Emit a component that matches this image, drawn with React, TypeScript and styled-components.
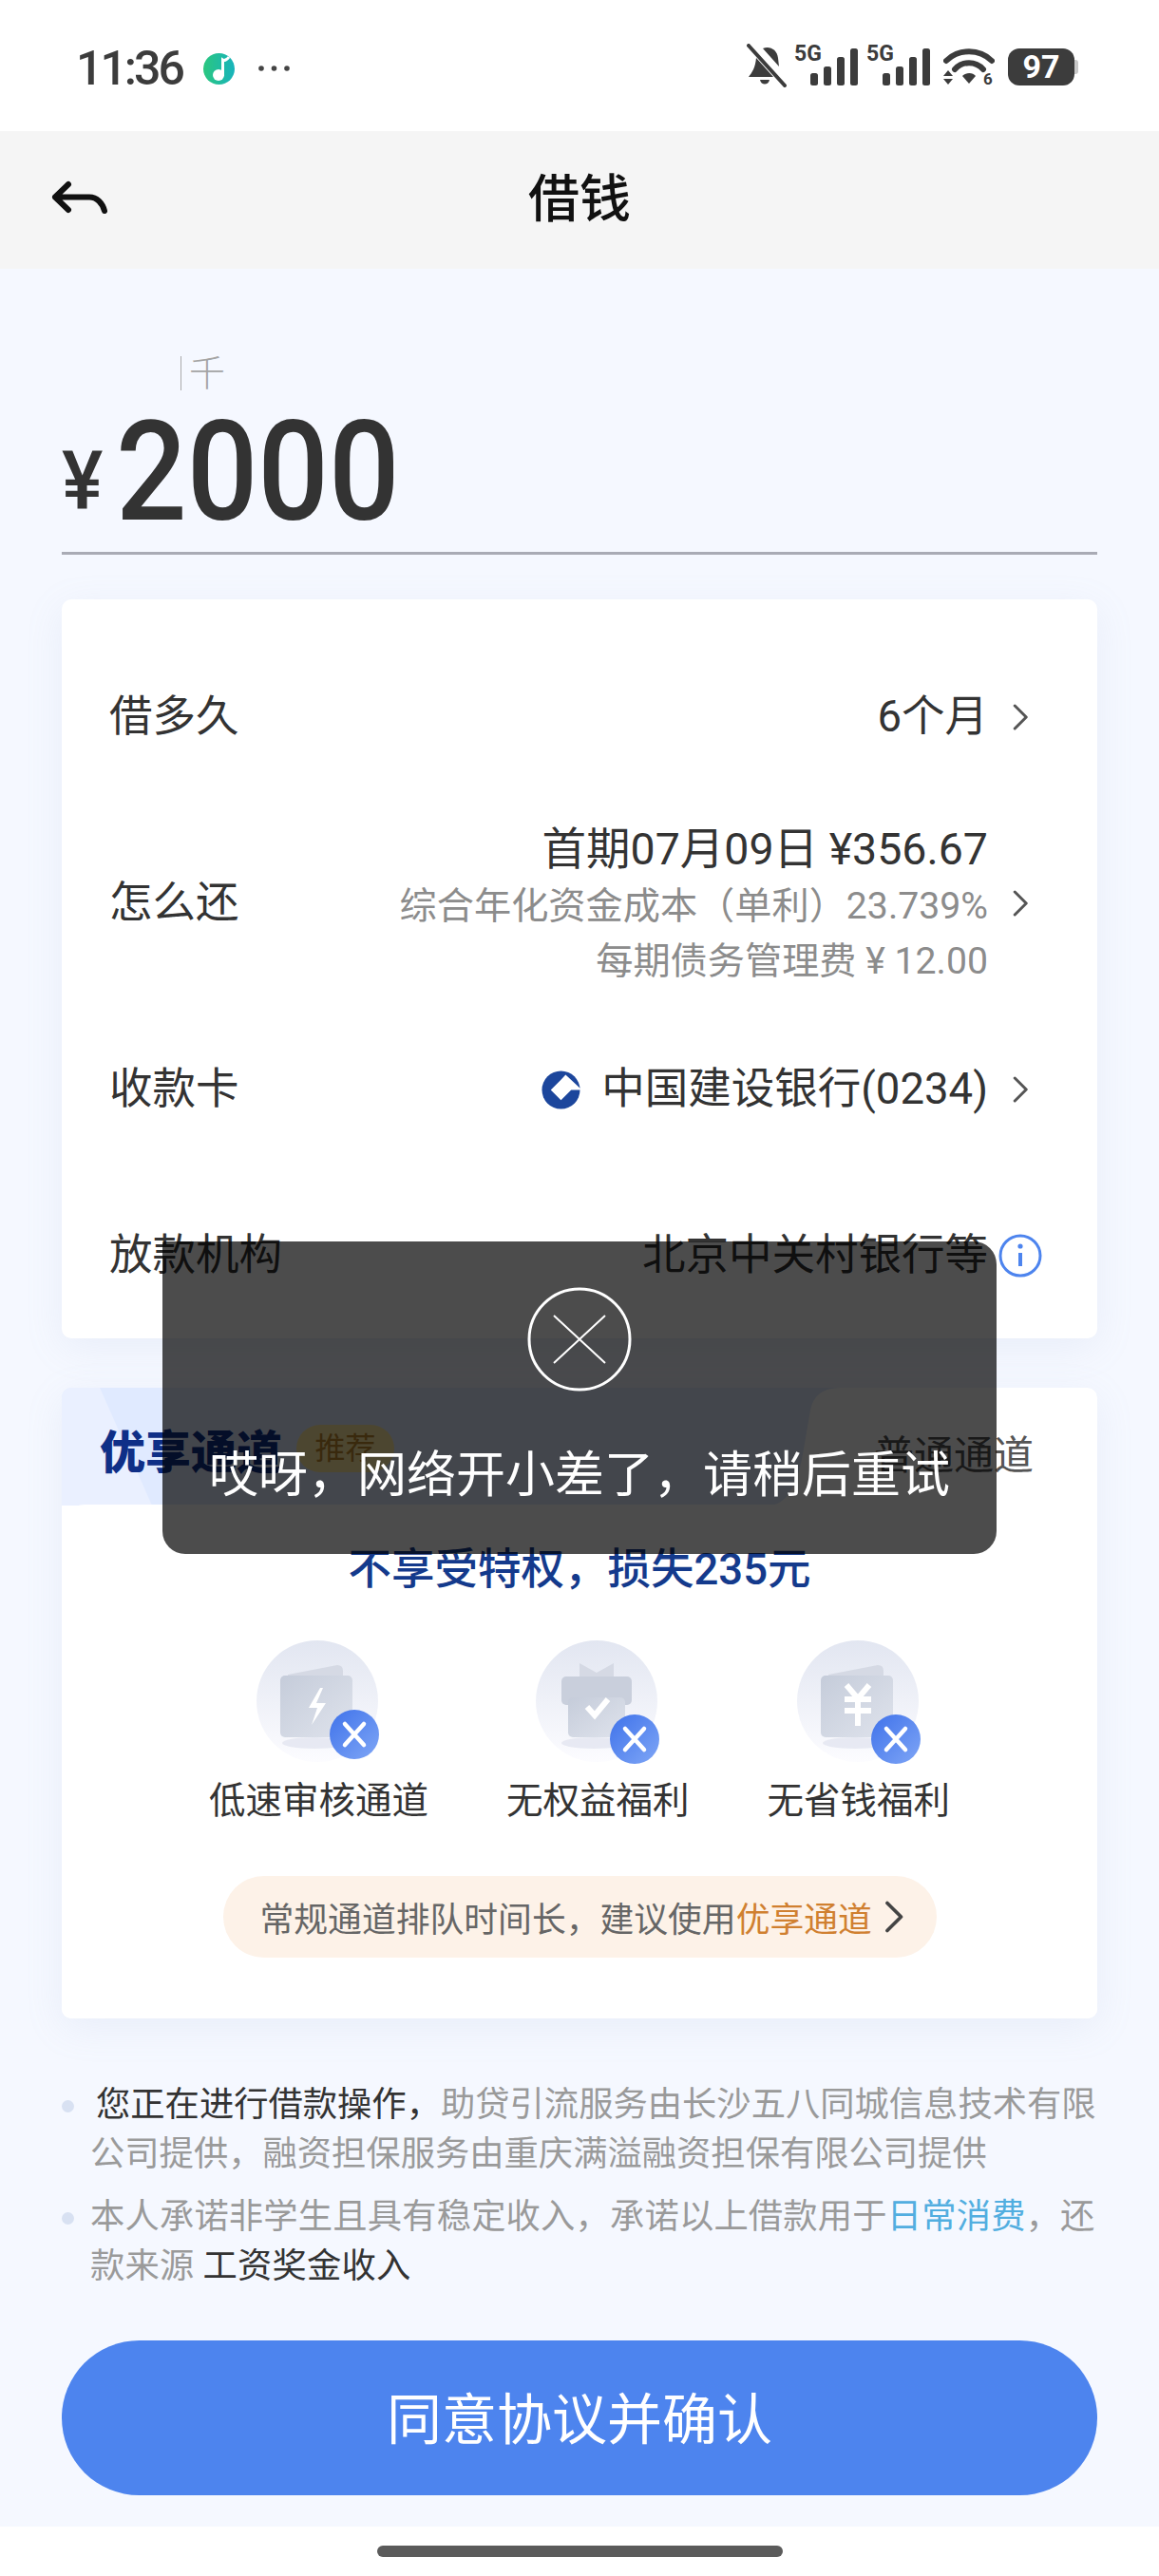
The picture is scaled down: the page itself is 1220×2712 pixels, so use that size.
import React from "react";
import styled, { createGlobalStyle } from "styled-components";

const CJK = `Roboto, "Noto Sans CJK SC", sans-serif`;

const Global = createGlobalStyle`
  html, body { margin: 0; padding: 0; background: #fff; }
  body { font-family: ${CJK}; }
  * { box-sizing: border-box; }
`;

const Page = styled.div`
  position: relative;
  width: 1220px;
  height: 2712px;
  overflow: hidden;
  display: flex;
  flex-direction: column;
  background: #f5f8ff;
`;

const StatusBar = styled.div`
  height: 138px;
  flex: none;
  background: #fff;
  display: flex;
  align-items: center;
  justify-content: space-between;
  padding: 0 85px 0 80px;
`;

const StatusLeft = styled.div`
  display: flex;
  align-items: center;
  padding-top: 6px;
`;

const Time = styled.span`
  font: 500 50px/1 Roboto, sans-serif;
  color: #3c3c3c;
  letter-spacing: -3px;
  width: 134px;
`;

const Dots = styled.svg`
  margin-left: 25px;
`;

const StatusRight = styled.div`
  display: flex;
  align-items: center;
  gap: 8px;
`;

const WifiIcon = styled.svg`
  margin: 2px 0 0 5px;
`;

const Battery = styled.div`
  position: relative;
  width: 70px;
  height: 39px;
  border-radius: 12px;
  background: #3c3c3c;
  color: #fff;
  font: 700 34px/39px Roboto, sans-serif;
  text-align: center;
  margin: 3px 4px 0 6px;
  &::after {
    content: "";
    position: absolute;
    right: -4px;
    top: 12px;
    width: 4px;
    height: 15px;
    border-radius: 0 3px 3px 0;
    background: #c8c8c8;
  }
`;

const NavBar = styled.div`
  position: relative;
  height: 145px;
  flex: none;
  background: #f5f5f5;
  display: flex;
  align-items: center;
  justify-content: center;
`;

const BackIcon = styled.svg`
  position: absolute;
  left: 52px;
  top: 50px;
`;

const Title = styled.h1`
  margin: 0;
  font-size: 54px;
  font-weight: 500;
  line-height: 1;
  color: #111;
`;

const Body = styled.div`
  flex: 1;
  padding: 92px 65px 0;
  display: flex;
  flex-direction: column;
`;

const AmountField = styled.div`
  height: 209px;
  border-bottom: 3px solid #a9abb5;
  flex: none;
`;

const UnitHint = styled.div`
  height: 36px;
  margin-left: 125px;
  padding-left: 8px;
  border-left: 1px solid #aaa;
  font-size: 38px;
  line-height: 36px;
  color: #a4a4a4;
  font-weight: 300;
`;

const AmountRow = styled.div`
  display: flex;
  align-items: flex-end;
  height: 146px;
  margin-top: 14px;
`;

const Yen = styled.span`
  font: 500 86px/1 Roboto, sans-serif;
  color: #333;
  width: 57px;
  transform: scaleX(0.95);
  transform-origin: left;
  margin-bottom: 21px;
`;

const Amount = styled.span`
  font: 500 146px/146px Roboto, sans-serif;
  color: #333;
  display: inline-block;
  transform: scaleX(0.9);
  transform-origin: left;
`;

const Card = styled.div`
  background: #fff;
  border-radius: 10px;
  box-shadow: 0 10px 40px rgba(150, 165, 205, 0.12);
  flex: none;
`;

const InfoCard = styled(Card)`
  margin-top: 47px;
  height: 778px;
  padding: 3px 47px 0 50px;
  display: flex;
  flex-direction: column;
`;

const Row = styled.div<{ $h: number }>`
  height: ${(p) => p.$h}px;
  display: flex;
  align-items: center;
  justify-content: space-between;
  color: #333;
  font-size: 45.5px;
  line-height: 1;
`;

const RowValue = styled.div`
  display: flex;
  align-items: center;
  color: #333;
`;

const Stack = styled.div`
  display: flex;
  flex-direction: column;
  align-items: flex-end;
  margin-top: 3px;
`;

const MainLine = styled.div`
  height: 60px;
  line-height: 58px;
  font-size: 46.5px;
`;

const SubLine = styled.div`
  font-size: 39.2px;
  height: 58px;
  line-height: 58px;
  color: #8c8c8c;
`;

const ChevronSlot = styled.div`
  width: 68px;
  flex: none;
  display: flex;
  justify-content: center;
`;

const BankLogo = styled.svg`
  margin-right: 22px;
`;

const PrivilegeCard = styled(Card)`
  margin-top: 52px;
  height: 664px;
  position: relative;
  overflow: hidden;
  display: flex;
  flex-direction: column;
`;

const Tabs = styled.div`
  position: relative;
  height: 124px;
  flex: none;
  display: flex;
  justify-content: space-between;
  background: #e0eaff;
  &::before {
    content: "";
    position: absolute;
    inset: 0;
    background: #eaf0ff;
    clip-path: polygon(0 0, 40px 0, 95px 100%, 0 100%);
  }
`;

const NormalTab = styled.div`
  position: relative;
  width: 346px;
  background: #fff;
  clip-path: path("M0 124 C18 124 30 104 36 70 L44 24 Q48 0 76 0 L346 0 L346 124 Z");
  display: flex;
  align-items: center;
  justify-content: flex-end;
  padding: 10px 67px 0 0;
  font-size: 42px;
  color: #555;
`;

const ActiveTab = styled.div`
  position: relative;
  display: flex;
  align-items: center;
  padding: 4px 0 0 40px;
  gap: 15px;
`;

const ActiveName = styled.span`
  font-size: 48px;
  font-weight: 900;
  color: #0f2f87;
`;

const RecommendBadge = styled.span`
  width: 103px;
  height: 50px;
  border-radius: 25px;
  background: #ffe9a0;
  color: #c08a2e;
  font-size: 32px;
  line-height: 50px;
  text-align: center;
`;

const PrivilegeBody = styled.div`
  flex: 1;
  margin-top: -1px;
  position: relative;
  background: #fff;
  border-radius: 24px 0 0 0;
  display: flex;
  flex-direction: column;
  align-items: center;
  padding-top: 44px;
`;

const Loss = styled.div`
  font-size: 45.5px;
  line-height: 50px;
  font-weight: 500;
  color: #143a8c;
`;

const Perks = styled.div`
  display: flex;
  gap: 82px;
  margin-top: 49px;
`;

const Perk = styled.div`
  display: flex;
  flex-direction: column;
  align-items: center;
  font-size: 38.5px;
  line-height: 44px;
  color: #333;
`;

const PerkArt = styled.svg`
  display: block;
  margin-bottom: 17px;
`;

const Hint = styled.div`
  margin-top: 57px;
  width: 751px;
  height: 86px;
  border-radius: 43px;
  background: #fdf2e8;
  display: flex;
  align-items: center;
  padding-left: 39px;
  font-size: 35.8px;
  color: #666;
`;

const HintLink = styled.span`
  color: #d08030;
  margin-right: 12px;
`;

const Notes = styled.div`
  margin-top: 65px;
  display: flex;
  flex-direction: column;
  gap: 14px;
  font-size: 36.3px;
  line-height: 52px;
  color: #9a9a9a;
  flex: none;
  width: 1100px;
`;

const Note = styled.p<{ $indent?: number; $spread?: number }>`
  position: relative;
  margin: 0;
  padding-left: 30px;
  text-indent: ${(p) => p.$indent || 0}px;
  letter-spacing: ${(p) => p.$spread || 0}px;
  &::before {
    content: "";
    position: absolute;
    left: 0;
    top: 21px;
    width: 13px;
    height: 13px;
    border-radius: 50%;
    background: #d8e1f2;
  }
`;

const Strong = styled.span`
  color: #333;
`;

const Link = styled.span`
  color: #52aee0;
`;

const Submit = styled.button`
  margin-top: 52px;
  flex: none;
  height: 163px;
  width: 100%;
  border: 0;
  border-radius: 82px;
  background: #4d84ee;
  color: #fff;
  font-family: ${CJK};
  font-size: 58px;
  padding: 0 0 5px;
`;

const HomeArea = styled.div`
  height: 52px;
  flex: none;
  background: #fff;
  display: flex;
  justify-content: center;
  padding-top: 20px;
`;

const HomeBar = styled.div`
  width: 427px;
  height: 12px;
  border-radius: 6px;
  background: #5b5b5b;
`;

const Toast = styled.div`
  position: absolute;
  left: 171px;
  top: 1307px;
  width: 878px;
  height: 329px;
  border-radius: 2px 24px 24px 24px;
  background: rgba(0, 0, 0, 0.7);
  display: flex;
  flex-direction: column;
  align-items: center;
  padding-top: 48px;
  color: #fff;
  font-size: 52px;
  line-height: 60px;
`;

const ToastIcon = styled.svg`
  display: block;
  margin-bottom: 59px;
`;

const Chevron = ({ size = 28, color = "#555" }: { size?: number; color?: string }) => (
  <svg width={size * 0.66} height={size} viewBox="0 0 18 28" fill="none">
    <path d="M3 2 L15 14 L3 26" stroke={color} strokeWidth="3" strokeLinecap="round" strokeLinejoin="round" />
  </svg>
);

const Signal = () => (
  <svg width="68" height="56" viewBox="0 -6 68 56" fill="#3c3c3c">
    <text x="0" y="17" fontFamily="Roboto" fontWeight="700" fontSize="23">5G</text>
    <rect x="17" y="30" width="8" height="13" rx="2.5" />
    <rect x="31" y="23" width="8" height="20" rx="2.5" />
    <rect x="45" y="13" width="8" height="30" rx="2.5" />
    <rect x="59" y="4" width="8" height="39" rx="2.5" />
  </svg>
);

const PerkIcon = ({ kind, bx, by }: { kind: "bolt" | "gift" | "yen"; bx: number; by: number }) => (
  <PerkArt width="132" height="130" viewBox="0 0 132 130" fill="none">
    <defs>
      <linearGradient id={`bg-${kind}`} x1="0" y1="0" x2="0" y2="1">
        <stop offset="0" stopColor="#e2e6f1" />
        <stop offset="1" stopColor="#fcfcff" />
      </linearGradient>
      <linearGradient id={`bd-${kind}`} x1="0" y1="0" x2="1" y2="1">
        <stop offset="0" stopColor="#3f72ea" />
        <stop offset="1" stopColor="#7fa6f6" />
      </linearGradient>
      <linearGradient id={`cd-${kind}`} x1="0" y1="0" x2="1" y2="1">
        <stop offset="0" stopColor="#c5ccda" />
        <stop offset="1" stopColor="#dfe3ec" />
      </linearGradient>
    </defs>
    <circle cx="65" cy="64" r="64" fill={`url(#bg-${kind})`} />
    {kind === "gift" ? (
      <>
        <path d="M47 24 L65 34 L83 24 L83 44 L47 44 Z" fill="#d5d9e4" />
        <rect x="28" y="38" width="74" height="30" rx="5" fill="#c9cfdc" />
        <rect x="35" y="60" width="60" height="42" rx="5" fill={`url(#cd-${kind})`} />
        <path d="M55 70 L63 79 L77 62" stroke="#fff" strokeWidth="6" />
      </>
    ) : (
      <>
        <path d="M34 36 L86 26 Q92 26 92 32 L92 50 L34 50 Z" fill="#d5d9e4" />
        <rect x="26" y="37" width="76" height="65" rx="5" fill={`url(#cd-${kind})`} />
        {kind === "bolt" ? (
          <path d="M68 50 L56 71 L65 71 L59 89 L74 66 L64 66 L71 50 Z" fill="#fff" />
        ) : (
          <path d="M53 47 L64 60 M77 47 L66 60 M51 62 L79 62 M51 74 L79 74 M65 60 L65 90" stroke="#fff" strokeWidth="6" />
        )}
      </>
    )}
    <ellipse cx="62" cy="108" rx="34" ry="6" fill="#dfe3ee" opacity="0.7" />
    <circle cx={bx} cy={by} r="26" fill={`url(#bd-${kind})`} />
    <path d={`M${bx - 10} ${by - 11} L${bx + 10} ${by + 11} M${bx + 10} ${by - 11} L${bx - 10} ${by + 11}`} stroke="#fff" strokeWidth="4.5" strokeLinecap="round" />
  </PerkArt>
);

export default function App() {
  return (
    <Page>
      <Global />
      <StatusBar>
        <StatusLeft>
          <Time>11:36</Time>
          <svg width="33" height="33" viewBox="0 0 33 33">
            <defs>
              <linearGradient id="app" x1="0" y1="0" x2="1" y2="0">
                <stop offset="0" stopColor="#2bc77f" />
                <stop offset="1" stopColor="#18b3bc" />
              </linearGradient>
            </defs>
            <circle cx="16.5" cy="16.5" r="16.5" fill="url(#app)" />
            <path d="M20.5 24 L20.5 7 C22 8 25 7 27 4" stroke="#fff" strokeWidth="3" fill="none" />
            <circle cx="16" cy="23" r="6" fill="#fff" />
          </svg>
          <Dots width="33" height="6" viewBox="0 0 33 6" fill="#444">
            <circle cx="3" cy="3" r="2.8" />
            <circle cx="16.5" cy="3" r="2.8" />
            <circle cx="30" cy="3" r="2.8" />
          </Dots>
        </StatusLeft>
        <StatusRight>
          <svg width="42" height="46" viewBox="0 0 42 46" fill="#3c3c3c">
            <path d="M17 5 C24 2 32 6 33 15 L34 24 Z M10 15 L28 35 L2 35 C6 30 9 25 10 15 Z M14 38 L24 38 C23 44 15 44 14 38 Z" />
            <path d="M2 2 L40 44" stroke="#3c3c3c" strokeWidth="4" strokeLinecap="round" />
          </svg>
          <Signal />
          <Signal />
          <WifiIcon width="54" height="52" viewBox="0 -6 54 52" fill="none">
            <path d="M3 14 C16 1 38 1 51 14" stroke="#3c3c3c" strokeWidth="6" strokeLinecap="round" />
            <path d="M12 23 C20 14 34 14 42 23" stroke="#3c3c3c" strokeWidth="6" strokeLinecap="round" />
            <path d="M20 30 C24 26 31 26 34 30 L27 38 Z" fill="#3c3c3c" />
            <path d="M5 24 L10 30 L0 30 Z M0 33 L10 33 L5 39 Z" fill="#3c3c3c" />
            <text x="42" y="39" fontFamily="Roboto" fontWeight="700" fontSize="17" fill="#3c3c3c">6</text>
          </WifiIcon>
          <Battery>97</Battery>
        </StatusRight>
      </StatusBar>
      <NavBar>
        <BackIcon width="66" height="44" viewBox="0 0 66 44" fill="none">
          <path d="M20 6 L6 19.5 L20 33 M6 19.5 L42 19.5 C50 19.5 56 26 58 34" stroke="#111" strokeWidth="6" strokeLinecap="round" strokeLinejoin="round" />
        </BackIcon>
        <Title>借钱</Title>
      </NavBar>
      <Body>
        <AmountField>
          <UnitHint>千</UnitHint>
          <AmountRow>
            <Yen>¥</Yen>
            <Amount>2000</Amount>
          </AmountRow>
        </AmountField>
        <InfoCard>
          <Row $h={241}>
            借多久
            <RowValue>
              6个月
              <ChevronSlot><Chevron /></ChevronSlot>
            </RowValue>
          </Row>
          <Row $h={152}>
            怎么还
            <RowValue>
              <Stack>
                <MainLine>首期07月09日 ¥356.67</MainLine>
                <SubLine>综合年化资金成本（单利）23.739%</SubLine>
                <SubLine>每期债务管理费 ¥ 12.00</SubLine>
              </Stack>
              <ChevronSlot><Chevron /></ChevronSlot>
            </RowValue>
          </Row>
          <Row $h={240}>
            收款卡
            <RowValue>
              <BankLogo width="41" height="41" viewBox="0 0 42 42" fill="none">
                <circle cx="21" cy="21" r="20.5" fill="#1c469c" />
                <path d="M21 10 L26 4.5 L42 19.5 L42 21 L32 21 L21 32 L10 21 Z" fill="#fff" />
              </BankLogo>
              中国建设银行(0234)
              <ChevronSlot><Chevron /></ChevronSlot>
            </RowValue>
          </Row>
          <Row $h={110}>
            放款机构
            <RowValue>
              北京中关村银行等
              <ChevronSlot>
                <svg width="46" height="46" viewBox="0 0 46 46" fill="none">
                  <circle cx="23" cy="23" r="21" stroke="#4d84ee" strokeWidth="3" />
                  <circle cx="23" cy="13" r="2.6" fill="#4d84ee" />
                  <path d="M23 20 L23 34" stroke="#4d84ee" strokeWidth="4" />
                </svg>
              </ChevronSlot>
            </RowValue>
          </Row>
        </InfoCard>
        <PrivilegeCard>
          <Tabs>
            <ActiveTab>
              <ActiveName>优享通道</ActiveName>
              <RecommendBadge>推荐</RecommendBadge>
            </ActiveTab>
            <NormalTab>普通通道</NormalTab>
          </Tabs>
          <PrivilegeBody>
            <Loss>不享受特权，损失235元</Loss>
            <Perks>
              <Perk>
                <PerkIcon kind="bolt" bx={104} by={99} />
                低速审核通道
              </Perk>
              <Perk>
                <PerkIcon kind="gift" bx={105} by={104} />
                无权益福利
              </Perk>
              <Perk>
                <PerkIcon kind="yen" bx={105} by={104} />
                无省钱福利
              </Perk>
            </Perks>
            <Hint>
              常规通道排队时间长，建议使用<HintLink>优享通道</HintLink>
              <Chevron size={34} color="#444" />
            </Hint>
          </PrivilegeBody>
        </PrivilegeCard>
        <Notes>
          <Note $indent={6}>
            <Strong>您正在进行借款操作，</Strong>助贷引流服务由长沙五八同城信息技术有限<br />公司提供，融资担保服务由重庆满溢融资担保有限公司提供
          </Note>
          <Note $spread={0.17}>
            本人承诺非学生且具有稳定收入，承诺以上借款用于<Link>日常消费</Link>，还<br />款来源 <Strong>工资奖金收入</Strong>
          </Note>
        </Notes>
        <Submit>同意协议并确认</Submit>
      </Body>
      <HomeArea>
        <HomeBar />
      </HomeArea>
      <Toast>
        <ToastIcon width="110" height="110" viewBox="0 0 110 110" fill="none">
          <circle cx="55" cy="55" r="53" stroke="#fff" strokeWidth="3" />
          <path d="M28 30 L82 80 M82 30 L28 80" stroke="#fff" strokeWidth="2" />
        </ToastIcon>
        哎呀，网络开小差了，请稍后重试
      </Toast>
    </Page>
  );
}
